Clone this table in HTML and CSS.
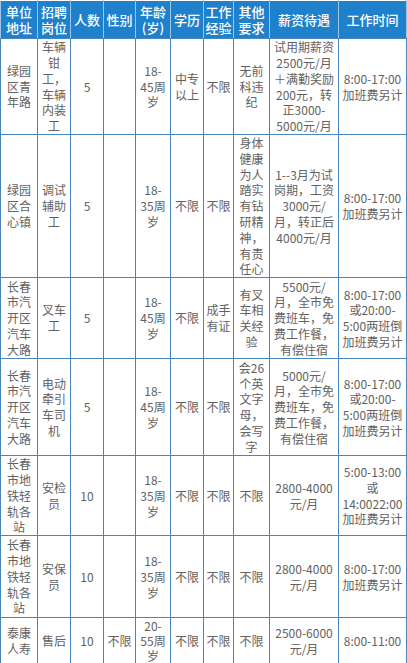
FILE: index.html
```html
<!DOCTYPE html>
<html lang="zh">
<head>
<meta charset="utf-8">
<link rel="stylesheet" href="styles.css">
</head>
<body>
<table class="jobs">
  <colgroup>
    <col class="c1"><col class="c2"><col class="c3"><col class="c4"><col class="c5">
    <col class="c6"><col class="c7"><col class="c8"><col class="c9"><col class="c10">
  </colgroup>
  <thead>
    <tr class="h">
      <th>单位地址</th><th>招聘岗位</th><th>人数</th><th>性别</th><th>年龄(岁)</th>
      <th>学历</th><th>工作经验</th><th>其他要求</th><th>薪资待遇</th><th>工作时间</th>
    </tr>
  </thead>
  <tbody>
    <tr class="r1">
      <td>绿园区青年路</td><td>车辆钳工，车辆内装工</td><td>5</td><td></td><td class="age">18-45周岁</td>
      <td>中专以上</td><td>不限</td><td>无前科违纪</td><td>试用期薪资2500元/月＋满勤奖励200元，转正3000-5000元/月</td><td>8:00-17:00加班费另计</td>
    </tr>
    <tr class="r2">
      <td>绿园区合心镇</td><td>调试辅助工</td><td>5</td><td></td><td class="age">18-35周岁</td>
      <td>不限</td><td>不限</td><td>身体健康为人踏实有钻研精神，有责任心</td><td>1--3月为试岗期，工资3000元/月，转正后4000元/月</td><td>8:00-17:00加班费另计</td>
    </tr>
    <tr class="r3">
      <td>长春市汽开区汽车大路</td><td>叉车工</td><td>5</td><td></td><td class="age">18-45周岁</td>
      <td>不限</td><td>成手有证</td><td>有叉车相关经验</td><td>5500元/月，全市免费班车，免费工作餐，有偿住宿</td><td>8:00-17:00或20:00-5:00两班倒加班费另计</td>
    </tr>
    <tr class="r4">
      <td>长春市汽开区汽车大路</td><td>电动牵引车司机</td><td>5</td><td></td><td class="age">18-45周岁</td>
      <td>不限</td><td>不限</td><td>会26个英文字母，会写字</td><td>5000元/月，全市免费班车，免费工作餐，有偿住宿</td><td>8:00-17:00或20:00-5:00两班倒加班费另计</td>
    </tr>
    <tr class="r5">
      <td>长春市地铁轻轨各站</td><td>安检员</td><td>10</td><td></td><td class="age">18-35周岁</td>
      <td>不限</td><td>不限</td><td>不限</td><td>2800-4000元/月</td><td>5:00-13:00<br>或<br>14:0022:00加班费另计</td>
    </tr>
    <tr class="r6">
      <td>长春市地铁轻轨各站</td><td>安保员</td><td>10</td><td></td><td class="age">18-35周岁</td>
      <td>不限</td><td>不限</td><td>不限</td><td>2800-4000元/月</td><td>8:00-17:00加班费另计</td>
    </tr>
    <tr class="r7">
      <td>泰康人寿</td><td>售后</td><td>10</td><td>不限</td><td class="age tight">20-55周岁</td>
      <td>不限</td><td>不限</td><td>不限</td><td>2500-6000元/月</td><td class="late">8:00-11:00</td>
    </tr>
  </tbody>
</table>
</body>
</html>
```

FILE: styles.css
```css
html, body {
  margin: 0;
  padding: 0;
  background: #ffffff;
}

.jobs {
  border-collapse: collapse;
  table-layout: fixed;
  width: 406px;
  font-family: "Noto Sans CJK SC", "Microsoft YaHei", sans-serif;
}

.c1 { width: 37px; }
.c2 { width: 33px; }
.c3 { width: 33px; }
.c4 { width: 32px; }
.c5 { width: 35px; }
.c6 { width: 33px; }
.c7 { width: 30px; }
.c8 { width: 36px; }
.c9 { width: 69px; }
.c10 { width: 68px; }

.jobs th,
.jobs td {
  border: 1px solid #4a86bb;
  padding: 0 1px;
  text-align: center;
  vertical-align: middle;
  overflow: hidden;
}

.jobs th {
  background: #1f80cb;
  color: #ffffff;
  font-size: 13px;
  font-weight: 500;
  line-height: 16px;
  border-color: #ffffff #9ec4e6 #4a86bb #9ec4e6;
}

.jobs td {
  color: #626262;
  font-size: 12px;
  line-height: 15.8px;
  background: #ffffff;
}

.jobs td.age {
  padding: 0 3px;
}

.jobs td.tight {
  line-height: 15px;
}

.h { height: 38px; }
.r1 { height: 96px; }
.r2 { height: 143px; }
.r3 { height: 81px; }
.r4 { height: 97px; }
.r5 { height: 79px; }
.r6 { height: 82px; }
.r7 { height: 46px; }

.late {
  padding-top: 6px;
}
```
